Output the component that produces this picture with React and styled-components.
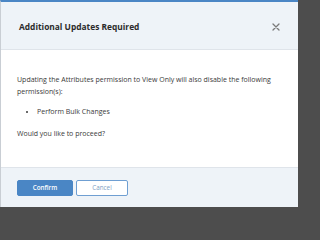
import React from 'react';
import styled, { createGlobalStyle } from 'styled-components';

const GlobalStyle = createGlobalStyle`
  html, body {
    margin: 0;
    padding: 0;
    background: #4d4d4d;
  }
`;

const Modal = styled.div`
  width: 297px;
  height: 205px;
  display: flex;
  flex-direction: column;
  background: #ffffff;
  border-top: 2px solid #4a86c5;
  border-left: 1px solid #c9ced4;
  font-family: "Open Sans", "Liberation Sans", sans-serif;
  color: #333333;
`;

const Header = styled.div`
  height: 48px;
  flex-shrink: 0;
  display: flex;
  align-items: center;
  justify-content: space-between;
  padding: 2px 16px 0 18px;
  background: #eef3f8;
  border-bottom: 1px solid #dfe4ea;
  box-sizing: border-box;
`;

const Title = styled.h2`
  margin: 0;
  font-size: 8.4px;
  font-weight: 700;
  color: #2b2b2b;
`;

const CloseButton = styled.button`
  width: 12px;
  height: 12px;
  padding: 0;
  border: none;
  background: transparent;
  display: flex;
  align-items: center;
  justify-content: center;
  cursor: pointer;
`;

const Body = styled.div`
  flex: 1;
  padding: 24px 16px 0 16px;
  font-size: 7px;
  line-height: 12px;
  color: #3a3a3a;
`;

const Paragraph = styled.p`
  margin: 0;
`;

const List = styled.ul`
  margin: 8px 0 10px 0;
  padding-left: 20px;
  list-style: disc;
`;

const Footer = styled.div`
  height: 40px;
  flex-shrink: 0;
  display: flex;
  align-items: center;
  gap: 3px;
  padding: 0 16px;
  background: #eef3f8;
  border-top: 1px solid #dfe4ea;
  box-sizing: border-box;
`;

const Button = styled.button`
  height: 16px;
  width: ${props => props.primary ? '56px' : '52px'};
  padding: 0;
  border-radius: 2px;
  border: 1px solid ${props => props.primary ? '#4a86c5' : '#6f9fd2'};
  background: ${props => props.primary ? '#4a86c5' : '#ffffff'};
  color: ${props => props.primary ? '#ffffff' : '#7f9fc4'};
  font-family: "Open Sans", "Liberation Sans", sans-serif;
  font-size: 6.3px;
  font-weight: ${props => props.primary ? 600 : 400};
  cursor: pointer;
`;

export default function App() {
  return (
    <>
      <GlobalStyle />
      <Modal>
        <Header>
          <Title>Additional Updates Required</Title>
          <CloseButton aria-label="Close">
            <svg width="8" height="8" viewBox="0 0 8 8">
              <path d="M1 1 L7 7 M7 1 L1 7" stroke="#7a7a7a" strokeWidth="1.3" strokeLinecap="round" />
            </svg>
          </CloseButton>
        </Header>
        <Body>
          <Paragraph>
            Updating the Attributes permission to View Only will also disable the following permission(s):
          </Paragraph>
          <List>
            <li>Perform Bulk Changes</li>
          </List>
          <Paragraph>Would you like to proceed?</Paragraph>
        </Body>
        <Footer>
          <Button primary>Confirm</Button>
          <Button>Cancel</Button>
        </Footer>
      </Modal>
    </>
  );
}
